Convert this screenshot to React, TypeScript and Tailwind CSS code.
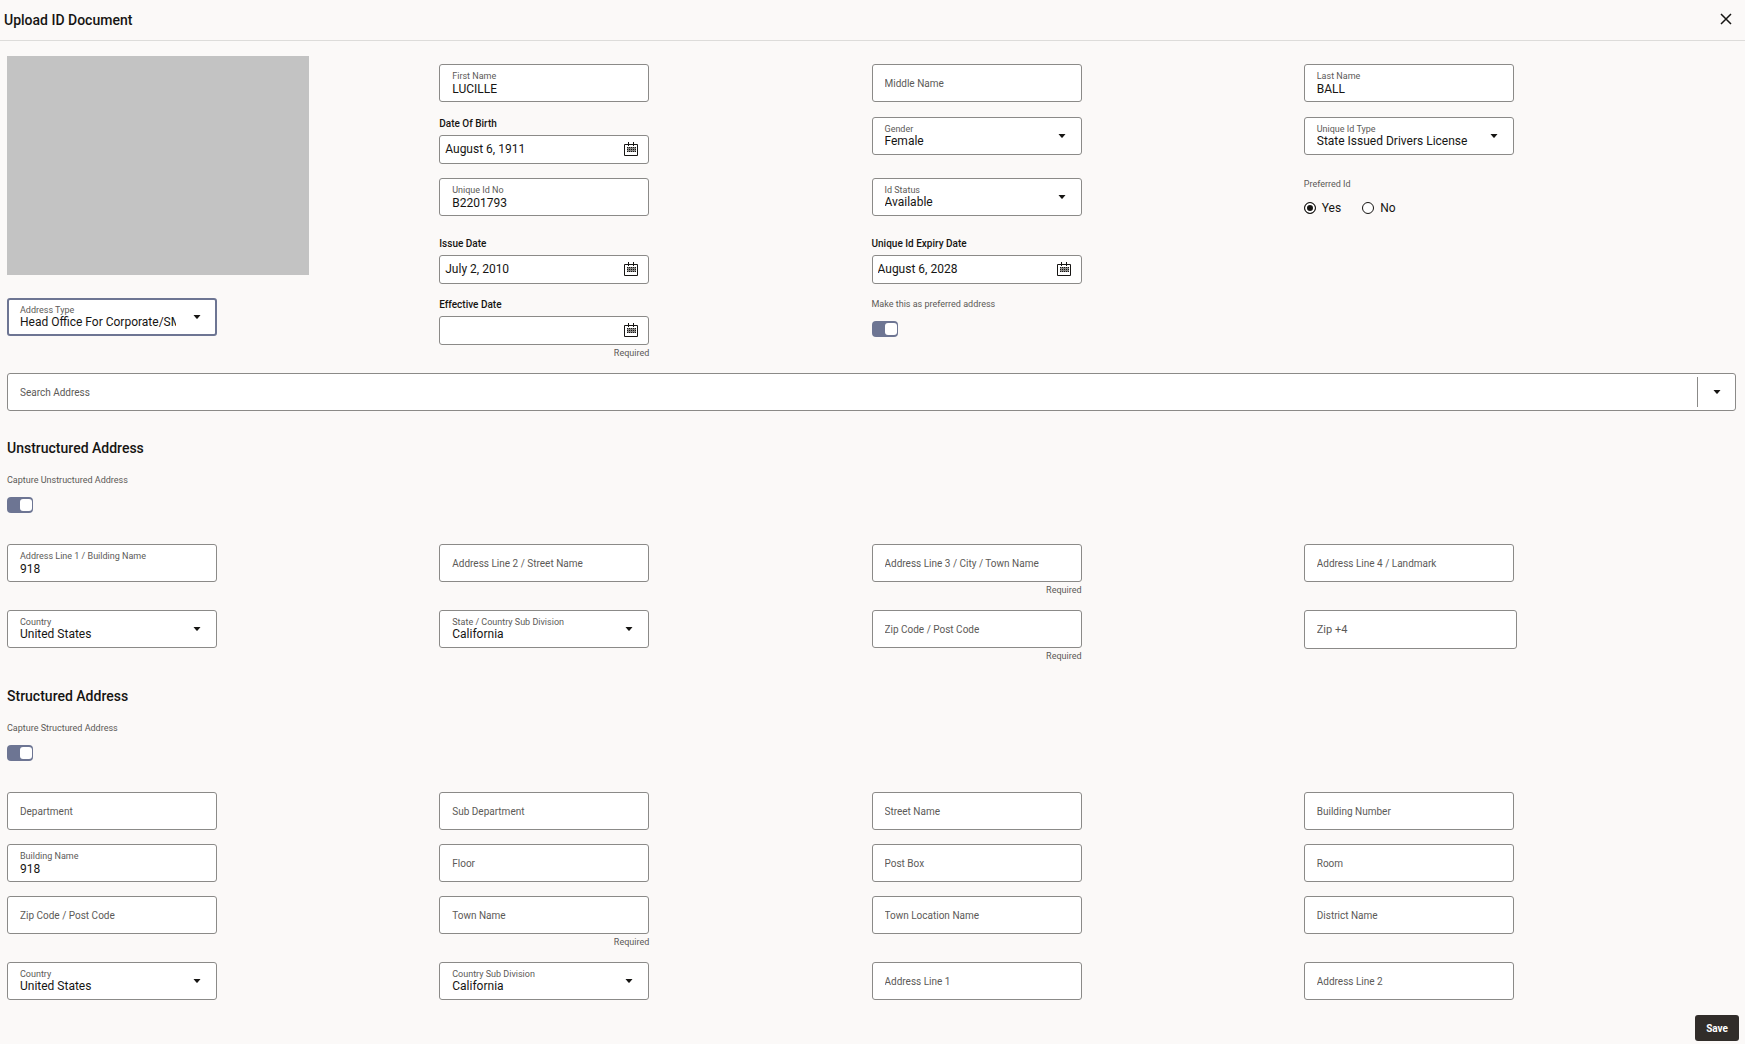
import { useState } from 'react';
import type { ReactNode } from 'react';
import clsx from 'clsx';

const BOX = 'rounded-[3px] border border-[#8b8a88] bg-white';

function Caret() {
  return (
    <svg width="8" height="4" viewBox="0 0 8 4" className="pointer-events-none shrink-0" aria-hidden="true">
      <path d="M0.5 0h7L4.6 3.4a0.8 0.8 0 0 1-1.2 0z" fill="#161513" />
    </svg>
  );
}

function CalendarIcon() {
  return (
    <svg width="16" height="16" viewBox="0 0 16 16" fill="none" stroke="#161513" aria-hidden="true">
      <path d="M1.5 3.5h13v11h-13z" />
      <path d="M5.5 1v4M10.5 1v4" />
      <path d="M4 6.5h9M4 8.5h9M4 10.5h9M4 7.5h9M4 9.5h9" stroke="#8b8a88" />
      <path d="M4 6.5h9M4 8.5h9M4 10.5h9" strokeDasharray="1 1" />
    </svg>
  );
}

function Required() {
  return <p className="pt-[3px] text-right text-[9px] leading-[11px] text-[#5c5a57]">Required</p>;
}

interface FieldProps {
  id: string;
  label: string;
  value?: string;
  required?: boolean;
}

function TextField({ id, label, value = '', required }: FieldProps) {
  const [text, setText] = useState(value);
  const filled = text !== '';
  return (
    <div className="w-[210px] max-w-full">
      <div className={clsx(BOX, 'flex h-[38px] flex-col justify-center px-3')}>
        {filled && (
          <label htmlFor={id} className="text-[9px] leading-[11px] text-[#5c5a57]">
            {label}
          </label>
        )}
        <input
          id={id}
          value={text}
          placeholder={label}
          aria-label={label}
          onChange={(e) => setText(e.target.value)}
          className={clsx(
            'w-full bg-transparent text-xs text-[#161513] outline-none placeholder:text-[10px] placeholder:text-[#5c5a57]',
            filled ? 'h-[13px]' : 'h-full',
          )}
        />
      </div>
      {required && <Required />}
    </div>
  );
}

function SelectField({ id, label, value, focused }: FieldProps & { focused?: boolean }) {
  return (
    <div
      className={clsx(
        'flex h-[38px] w-[210px] max-w-full items-center rounded-[3px] bg-white',
        focused ? 'border-2 border-[#6d7593] pr-[14px] pl-[11px]' : 'border border-[#8b8a88] pr-[15px] pl-3',
      )}
    >
      <div className="mr-[17px] flex min-w-0 flex-1 flex-col">
        <label htmlFor={id} className="text-[9px] leading-[11px] text-[#5c5a57]">
          {label}
        </label>
        <select id={id} className="h-[13px] w-full appearance-none bg-transparent text-xs leading-[13px] text-[#161513] outline-none">
          <option>{value}</option>
        </select>
      </div>
      <Caret />
    </div>
  );
}

function DateField({ id, label, value = '', required }: FieldProps) {
  return (
    <div className="w-[210px] max-w-full">
      <label htmlFor={id} className="block h-[18px] text-[10px] leading-[14px] font-medium text-[#161513]">
        {label}
      </label>
      <div className={clsx(BOX, 'flex h-[29px] items-center pr-[9px] pb-px pl-[5px]')}>
        <input id={id} defaultValue={value} className="min-w-0 flex-1 bg-transparent text-xs text-[#161513] outline-none" />
        <button type="button" aria-label={`Open calendar for ${label}`}>
          <CalendarIcon />
        </button>
      </div>
      {required && <Required />}
    </div>
  );
}

function Toggle({ id, label }: { id: string; label: string }) {
  return (
    <div className="flex flex-col items-start">
      <label htmlFor={id} className="text-[9px] leading-3 text-[#5c5a57]">
        {label}
      </label>
      <span className="relative mt-[11px] flex h-4 w-[26px]">
        <input
          id={id}
          type="checkbox"
          role="switch"
          defaultChecked
          className="peer h-4 w-[26px] appearance-none rounded-[4px] bg-[#b5b4b2] checked:bg-[#6d7593]"
        />
        <span className="pointer-events-none absolute top-[2px] left-[2px] h-3 w-3 rounded-[3px] bg-white peer-checked:left-[13px]" />
      </span>
    </div>
  );
}

function Radio({ label, checked }: { label: string; checked?: boolean }) {
  return (
    <label className="flex items-center gap-[6px] text-xs text-[#161513]">
      <input
        type="radio"
        name="preferredId"
        defaultChecked={checked}
        className="h-3 w-3 appearance-none rounded-full border border-[#161513] bg-white checked:bg-[#161513] checked:shadow-[inset_0_0_0_2px_white]"
      />
      {label}
    </label>
  );
}

function Section({ title, toggleId, toggleLabel, children }: { title: string; toggleId: string; toggleLabel: string; children: ReactNode }) {
  return (
    <section>
      <h2 className="text-sm leading-5 font-medium text-[#161513]">{title}</h2>
      <div className="mt-4">
        <Toggle id={toggleId} label={toggleLabel} />
      </div>
      <div className="mt-[31px]">{children}</div>
    </section>
  );
}

export default function App() {
  return (
    <form className="min-h-screen bg-[#fbf9f8] font-[Roboto,'Noto_Sans',sans-serif]" onSubmit={(e) => e.preventDefault()}>
      <header className="flex h-[41px] items-center justify-between border-b border-[#dddcda] pr-3 pl-1">
        <h1 className="text-sm font-medium text-[#161513]">Upload ID Document</h1>
        <button type="button" aria-label="Close" className="pb-[2px]">
          <svg width="14" height="14" viewBox="0 0 14 14" stroke="#161513" strokeWidth="1.5" aria-hidden="true">
            <path d="M2 2l10 10M12 2L2 12" />
          </svg>
        </button>
      </header>

      <main className="pr-[9px] pl-[7px]">
        <div className="flex">
          <div className="w-1/4 pt-[15px]">
            {/* Scanned document preview */}
            <div className="h-[219px] w-[302px] max-w-full bg-[#c3c3c3]" />
            <div className="mt-[23px]">
              <SelectField id="addressType" label="Address Type" value="Head Office For Corporate/SME" focused />
            </div>
          </div>

          <div className="grid w-3/4 grid-cols-3 grid-rows-[53px_61px_59px_61px_auto] pt-[23px]">
            <TextField id="firstName" label="First Name" value="LUCILLE" />
            <TextField id="middleName" label="Middle Name" />
            <TextField id="lastName" label="Last Name" value="BALL" />

            <DateField id="dob" label="Date Of Birth" value="August 6, 1911" />
            <SelectField id="gender" label="Gender" value="Female" />
            <SelectField id="idType" label="Unique Id Type" value="State Issued Drivers License" />

            <TextField id="idNo" label="Unique Id No" value="B2201793" />
            <SelectField id="idStatus" label="Id Status" value="Available" />
            <fieldset>
              <legend className="text-[9px] leading-3 text-[#5c5a57]">Preferred Id</legend>
              <div className="mt-[10px] flex gap-[21px]">
                <Radio label="Yes" checked />
                <Radio label="No" />
              </div>
            </fieldset>

            <DateField id="issueDate" label="Issue Date" value="July 2, 2010" />
            <DateField id="expiryDate" label="Unique Id Expiry Date" value="August 6, 2028" />
            <div />

            <DateField id="effectiveDate" label="Effective Date" required />
            <Toggle id="preferredAddress" label="Make this as preferred address" />
          </div>
        </div>

        <div className={clsx(BOX, 'mt-[14px] flex h-[38px] items-center')}>
          <input
            aria-label="Search Address"
            placeholder="Search Address"
            className="h-full min-w-0 flex-1 bg-transparent px-3 text-xs outline-none placeholder:text-[10px] placeholder:text-[#5c5a57]"
          />
          <button
            type="button"
            aria-label="Show addresses"
            className="flex h-[30px] w-[38px] items-center justify-center border-l border-[#8b8a88]"
          >
            <Caret />
          </button>
        </div>

        <div className="mt-[27px]">
          <Section title="Unstructured Address" toggleId="captureUnstructured" toggleLabel="Capture Unstructured Address">
            <div className="grid grid-cols-4 gap-y-[14px]">
              <TextField id="line1" label="Address Line 1 / Building Name" value="918" />
              <TextField id="line2" label="Address Line 2 / Street Name" />
              <TextField id="line3" label="Address Line 3 / City / Town Name" required />
              <TextField id="line4" label="Address Line 4 / Landmark" />
              <SelectField id="country" label="Country" value="United States" />
              <SelectField id="state" label="State / Country Sub Division" value="California" />
              <TextField id="zip" label="Zip Code / Post Code" required />
              <input
                aria-label="Zip +4"
                placeholder="Zip +4"
                className={clsx(BOX, 'h-[39px] w-[213px] max-w-full px-3 text-[11px] outline-none placeholder:text-[#5c5a57]')}
              />
            </div>
          </Section>
        </div>

        <div className="mt-6">
          <Section title="Structured Address" toggleId="captureStructured" toggleLabel="Capture Structured Address">
            <div className="grid grid-cols-4 gap-y-[14px]">
              <TextField id="department" label="Department" />
              <TextField id="subDepartment" label="Sub Department" />
              <TextField id="streetName" label="Street Name" />
              <TextField id="buildingNumber" label="Building Number" />
              <TextField id="buildingName" label="Building Name" value="918" />
              <TextField id="floor" label="Floor" />
              <TextField id="postBox" label="Post Box" />
              <TextField id="room" label="Room" />
              <TextField id="postCode" label="Zip Code / Post Code" />
              <TextField id="townName" label="Town Name" required />
              <TextField id="townLocation" label="Town Location Name" />
              <TextField id="district" label="District Name" />
              <SelectField id="structuredCountry" label="Country" value="United States" />
              <SelectField id="subDivision" label="Country Sub Division" value="California" />
              <TextField id="addressLine1" label="Address Line 1" />
              <TextField id="addressLine2" label="Address Line 2" />
            </div>
          </Section>
        </div>
      </main>

      <footer className="flex justify-end pt-[15px] pr-[6px]">
        <button type="submit" className="h-[26px] rounded-[3px] bg-[#312d2a] px-[11px] text-[10px] font-bold text-white">
          Save
        </button>
      </footer>
    </form>
  );
}
